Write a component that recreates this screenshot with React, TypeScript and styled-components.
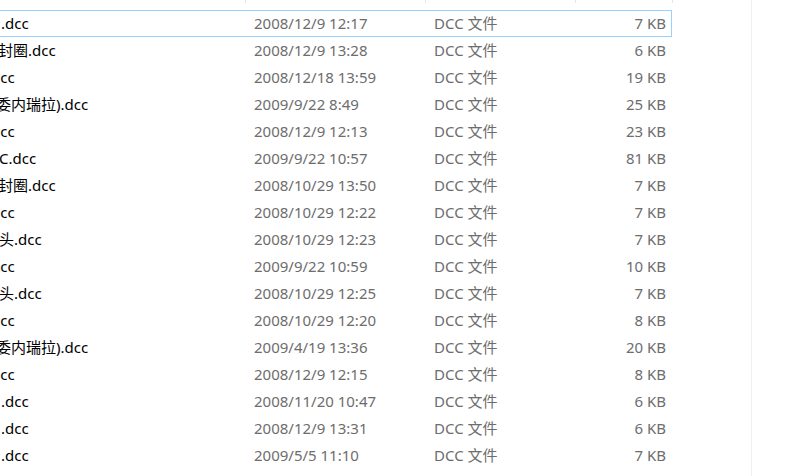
import React from "react";
import styled, { createGlobalStyle } from "styled-components";

const Global = createGlobalStyle`
  html, body { margin: 0; padding: 0; background: #ffffff; }
  body { overflow: hidden; }
`;

const Pane = styled.div`
  width: 751px;
  height: 476px;
  border-right: 1px solid #f0f0f0;
  overflow: hidden;
  font-family: "Noto Sans", "Noto Sans CJK SC", sans-serif;
  font-size: 15px;
`;

const HeaderStrip = styled.div`
  display: grid;
  grid-template-columns: 246px 180px 150px 97px;
  height: 3px;
  margin-bottom: 7px;
`;

const HeaderCell = styled.div`
  border-right: 1px solid #e5e5e5;
`;

const Row = styled.div<{ $focused?: boolean }>`
  box-sizing: border-box;
  display: grid;
  grid-template-columns: 246px 180px 150px 96px;
  width: 672px;
  height: 27px;
  border: 1px solid ${(p) => (p.$focused ? "#99d1ff" : "transparent")};
  border-left: none;
  align-items: center;
`;

const NameCell = styled.div`
  overflow: hidden;
  white-space: nowrap;
  color: #000000;
  line-height: 25px;
`;

const NameText = styled.span`
  display: inline-block;
`;

const Cell = styled.div<{ $right?: boolean }>`
  color: #6d6d6d;
  white-space: nowrap;
  line-height: 25px;
  padding: ${(p) => (p.$right ? "0 6px 0 0" : "0 0 0 8px")};
  text-align: ${(p) => (p.$right ? "right" : "left")};
`;

type File = { name: string; shift: number; date: string; size: string };

const files: File[] = [
  { name: ".dcc", shift: 1, date: "2008/12/9 12:17", size: "7 KB" },
  { name: "封圈.dcc", shift: -2, date: "2008/12/9 13:28", size: "6 KB" },
  { name: "dcc", shift: -9, date: "2008/12/18 13:59", size: "19 KB" },
  { name: "委内瑞拉).dcc", shift: -4, date: "2009/9/22 8:49", size: "25 KB" },
  { name: "dcc", shift: -9, date: "2008/12/9 12:13", size: "23 KB" },
  { name: "C.dcc", shift: -1, date: "2009/9/22 10:57", size: "81 KB" },
  { name: "封圈.dcc", shift: -2, date: "2008/10/29 13:50", size: "7 KB" },
  { name: "dcc", shift: -9, date: "2008/10/29 12:22", size: "7 KB" },
  { name: "头.dcc", shift: -1, date: "2008/10/29 12:23", size: "7 KB" },
  { name: "dcc", shift: -9, date: "2009/9/22 10:59", size: "10 KB" },
  { name: "头.dcc", shift: -1, date: "2008/10/29 12:25", size: "7 KB" },
  { name: "dcc", shift: -9, date: "2008/10/29 12:20", size: "8 KB" },
  { name: "委内瑞拉).dcc", shift: -4, date: "2009/4/19 13:36", size: "20 KB" },
  { name: "dcc", shift: -9, date: "2008/12/9 12:15", size: "8 KB" },
  { name: ".dcc", shift: 1, date: "2008/11/20 10:47", size: "6 KB" },
  { name: ".dcc", shift: 1, date: "2008/12/9 13:31", size: "6 KB" },
  { name: ".dcc", shift: 1, date: "2009/5/5 11:10", size: "7 KB" },
];

export default function App() {
  return (
    <>
      <Global />
      <Pane>
        <HeaderStrip>
          <HeaderCell />
          <HeaderCell />
          <HeaderCell />
          <HeaderCell />
        </HeaderStrip>
        {files.map((f, i) => (
          <Row key={i} $focused={i === 0}>
            <NameCell>
              <NameText style={{ marginLeft: f.shift }}>{f.name}</NameText>
            </NameCell>
            <Cell>{f.date}</Cell>
            <Cell>DCC 文件</Cell>
            <Cell $right>{f.size}</Cell>
          </Row>
        ))}
      </Pane>
    </>
  );
}
